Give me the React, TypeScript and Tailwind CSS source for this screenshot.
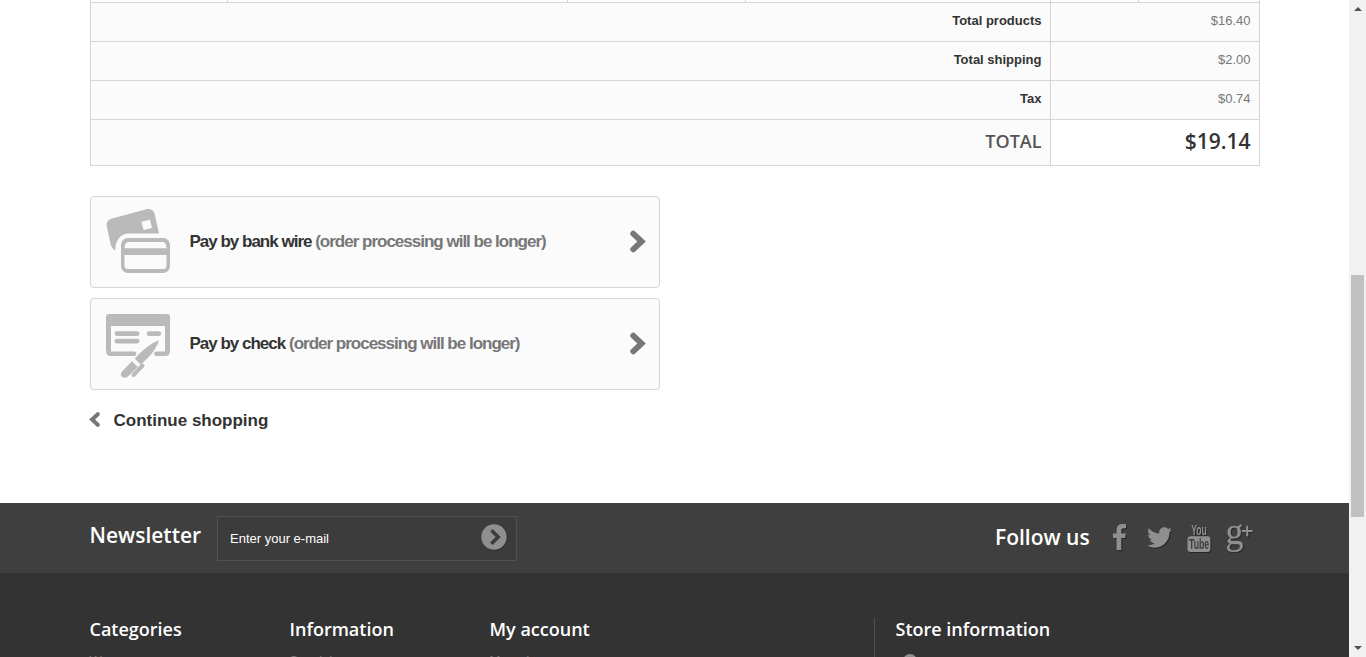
import type { ReactNode } from "react";
import { FaTwitter } from "react-icons/fa";

function Chevron({ className }: { className: string }) {
  return (
    <svg viewBox="0 0 16 22" className={className} fill="none" stroke="currentColor" strokeWidth="5.8" strokeLinecap="round">
      <path d="M3.2 3.2 11.6 11 3.2 18.8" />
    </svg>
  );
}

function WireIcon() {
  return (
    <svg viewBox="0 0 64 64" className="mb-0.5 h-16 w-16" fill="#bababa">
      <path
        fillRule="evenodd"
        d="M6 9.5 40.5.3C44.5-.6 47.8 1.2 48.7 5L53 24.6H23C14.5 24.6 9.5 31 9.3 41.5 6.5 40 5.3 38 4.6 35L.8 17.5C0 13.5 2 10.6 6 9.5ZM35.5 12.8 37.5 21 46 18.9 43.9 10.7Z"
      />
      <path
        fillRule="evenodd"
        d="M22 29H57A7 7 0 0 1 64 36V57A7 7 0 0 1 57 64H22A7 7 0 0 1 15 57V36A7 7 0 0 1 22 29ZM22 33Q19 33 18.5 39.3H60.5Q60 33 57 33ZM18.5 46V56.5Q18.5 60 22 60H57Q60.5 60 60.5 56.5V46Z"
      />
    </svg>
  );
}

function CheckIcon() {
  return (
    <svg viewBox="0 0 64 64" className="mt-1 h-16 w-16" fill="#bababa">
      <path d="M3 0H61Q64 0 64 3V37Q64 42 59 42H50.5Q48 42 48 39.8T50.5 37.5H59V12H5V37.5H28Q30.5 37.5 30.5 39.8T28 42H5Q0 42 0 37V3Q0 0 3 0Z" />
      <rect x="8.5" y="17.3" width="25" height="4.6" rx="2.3" />
      <rect x="8.5" y="24.8" width="25" height="4.6" rx="2.3" />
      <rect x="40.7" y="17.3" width="14.5" height="4.6" rx="2.3" />
      <path d="M53 26.3C50 35 46 40.5 34.7 50.7L28.8 44.5C38 35 43.5 30 53 26.3Z" />
      <path d="M26 47.2 31.8 53 22 62.5C17.5 66 12.7 61.5 16 57.5Z" />
      <path d="M36.5 51.5 27.5 61" stroke="#bababa" strokeWidth="4" strokeLinecap="round" />
    </svg>
  );
}

function FacebookIcon() {
  return (
    <svg viewBox="0 0 13 26" className="h-[26px] w-[13px] drop-shadow-[1px_1px_0_rgba(0,0,0,0.4)]" fill="#908f8f">
      <path d="M13 .2V4.3H10.6C8.7 4.3 8.3 5.2 8.3 6.6V9.5H12.8L12.2 14H8.3V26H3.6V14H0V9.5H3.6V6.1C3.6 2.1 6 0 9.5 0 11.2 0 12.6.1 13 .2Z" />
    </svg>
  );
}

function YouTubeStackIcon() {
  return (
    <svg viewBox="0 0 24 29" className="h-[29px] w-6 overflow-visible drop-shadow-[1px_1px_0_rgba(0,0,0,0.4)]">
      <text x="4.2" y="10.7" fontFamily="Liberation Sans Narrow, Liberation Sans, sans-serif" fontSize="14.5" fontWeight="bold" fill="#908f8f" textLength="15.6" lengthAdjust="spacingAndGlyphs">You</text>
      <rect x="0.5" y="12.2" width="22.9" height="15.8" rx="3.2" fill="#908f8f" />
      <text x="2" y="25.2" fontFamily="Liberation Sans Narrow, Liberation Sans, sans-serif" fontSize="14" fontWeight="bold" fill="#3f3f3f" textLength="20.2" lengthAdjust="spacingAndGlyphs">Tube</text>
    </svg>
  );
}

function GooglePlusIcon() {
  return (
    <svg viewBox="0 0 28 28" className="h-7 w-7 overflow-visible drop-shadow-[1px_1px_0_rgba(0,0,0,0.4)]">
      <text x="-0.5" y="20.2" fontFamily="Liberation Serif, serif" fontSize="38" fill="#908f8f" stroke="#908f8f" strokeWidth="0.3" textLength="18" lengthAdjust="spacingAndGlyphs">g</text>
      <path d="M21.2 1.7V12.3M15.9 7H26.5" stroke="#908f8f" strokeWidth="2" />
    </svg>
  );
}

function TotalRow({ label, price }: { label: string; price: string }) {
  return (
    <div className="flex h-[39px] border-b border-[#d6d4d4] bg-[#fbfbfb] text-right text-[13px] leading-[18px]">
      <div className="w-[960px] border-r border-[#d6d4d4] pr-[8.5px] pl-2 py-[9px] font-bold text-[#333]">{label}</div>
      <div className="flex-1 pr-[8.5px] pl-2 py-[9px] text-[#777]">{price}</div>
    </div>
  );
}

function Payment({ icon, label }: { icon: ReactNode; label: string }) {
  return (
    <a className="flex h-[92px] w-[570px] items-center rounded border border-[#d6d4d4] bg-[#fbfbfb] pr-[13px] pl-[15px] text-[17px] leading-[23px] font-bold tracking-[-1px] text-[#333]">
      {icon}
      <span className="ml-[19.5px] flex-1 pb-0.5">
        {label} <span className="text-[#777]">(order processing will be longer)</span>
      </span>
      <Chevron className="mb-px h-[23px] w-4 text-[#777]" />
    </a>
  );
}

function FooterColumn({ title, first, className }: { title: string; first: string; className: string }) {
  return (
    <section className={className}>
      <h4 className="font-['Open_Sans'] text-[18px] leading-[22px] font-semibold text-white">{title}</h4>
      <p className="mt-3 text-[13px] leading-[18px] text-[#777]">{first}</p>
    </section>
  );
}

export default function App() {
  return (
    <div className="flex h-[657px] w-[1366px] overflow-hidden bg-white font-['Liberation_Sans',Arial,sans-serif]">
      <main className="w-[1349px]">
        <div className="h-[503px] pl-[90px]">
          <div className="w-[1170px] border-x border-[#d6d4d4]">
            <div className="flex h-[3px] border-b border-[#d6d4d4]">
              <div className="w-[137px] border-r border-[#d6d4d4]" />
              <div className="w-[340px] border-r border-[#d6d4d4]" />
              <div className="w-[178px] border-r border-[#d6d4d4]" />
              <div className="w-[305px] border-r border-[#d6d4d4]" />
              <div className="w-[88px] border-r border-[#d6d4d4]" />
            </div>
            <TotalRow label="Total products" price="$16.40" />
            <TotalRow label="Total shipping" price="$2.00" />
            <TotalRow label="Tax" price="$0.74" />
            <div className="flex h-[46px] items-center border-b border-[#d6d4d4] text-right font-['Open_Sans']">
              <div className="flex h-full w-[960px] items-center justify-end border-r border-[#d6d4d4] bg-[#fbfbfb] pr-[8.5px] pb-0.5 text-[18px] font-semibold text-[#555]">TOTAL</div>
              <div className="flex-1 pr-[8.5px] pb-0.5 text-[21px] leading-[25px] font-semibold text-[#333]">$19.14</div>
            </div>
          </div>
          <div className="mt-[30px] flex flex-col gap-2.5">
            <Payment icon={<WireIcon />} label="Pay by bank wire" />
            <Payment icon={<CheckIcon />} label="Pay by check" />
          </div>
          <a className="mt-[19px] flex items-center text-[17px] leading-[23px] font-bold text-[#333]">
            <Chevron className="mb-[3px] -ml-px h-[15px] w-[11px] rotate-180 text-[#777]" />
            <span className="ml-[13.5px]">Continue shopping</span>
          </a>
        </div>

        <footer className="h-[154px] bg-[#333]">
          <div className="flex h-[70px] bg-[#3f3f3f] pl-[89.5px]">
            <h4 className="w-[127.5px] pt-5 font-['Open_Sans'] text-[21px] leading-[25px] font-semibold text-white">Newsletter</h4>
            <div className="mt-[13px] flex h-[45px] w-[300px] items-center justify-between border border-[#515151] bg-[#3c3c3c] pr-[9px] pl-3">
              <span className="text-[13px] leading-[18px] text-white">Enter your e-mail</span>
              <svg viewBox="0 0 26 26" className="mb-[3px] h-[26px] w-[26px] drop-shadow-[1px_1px_0_rgba(0,0,0,0.2)]">
                <circle cx="13" cy="13" r="12.7" fill="#908f8f" />
                <path d="m10.4 6.2 6.8 6.8-6.8 6.8" fill="none" stroke="#3c3c3c" strokeWidth="3.6" />
              </svg>
            </div>
            <h4 className="ml-[478px] w-[118px] pt-[22px] font-['Open_Sans'] text-[21px] leading-[25px] font-semibold text-white">Follow us</h4>
            <div className="flex pt-[21px] text-[#908f8f]">
              <FacebookIcon />
              <FaTwitter className="mt-px ml-[21px] h-[25px] w-[25px] drop-shadow-[1px_1px_0_rgba(0,0,0,0.4)]" />
              <div className="ml-[15px]"><YouTubeStackIcon /></div>
              <div className="ml-[15px]"><GooglePlusIcon /></div>
            </div>
          </div>
          <div className="flex h-[84px] overflow-hidden pt-[45px] pl-[89.5px]">
            <FooterColumn title="Categories" first="Women" className="w-[200px]" />
            <FooterColumn title="Information" first="Specials" className="w-[200px]" />
            <FooterColumn title="My account" first="My orders" className="w-[384.5px]" />
            <section className="h-full border-l border-[#515151] pl-[20.5px]">
              <h4 className="font-['Open_Sans'] text-[18px] leading-[22px] font-semibold text-white">Store information</h4>
              <svg viewBox="0 0 16 22" className="mt-[13.5px] ml-1.5 h-[22px] w-4" fill="#908f8f">
                <path d="M8 0a7 7 0 0 1 7 7c0 3-3 8-7 14C4 15 1 10 1 7a7 7 0 0 1 7-7Z" />
              </svg>
            </section>
          </div>
        </footer>
      </main>

      <aside className="flex w-[17px] flex-col items-center bg-[#f1f1f1]">
        <svg viewBox="0 0 8 4" className="mt-[7px] h-1 w-2" fill="#505050"><path d="M0 4 4 0 8 4Z" /></svg>
        <div className="mt-[264px] h-[242px] w-[13px] bg-[#c1c1c1]" />
        <svg viewBox="0 0 8 4" className="mt-[129px] h-1 w-2" fill="#505050"><path d="M0 0 4 4 8 0Z" /></svg>
      </aside>
    </div>
  );
}
